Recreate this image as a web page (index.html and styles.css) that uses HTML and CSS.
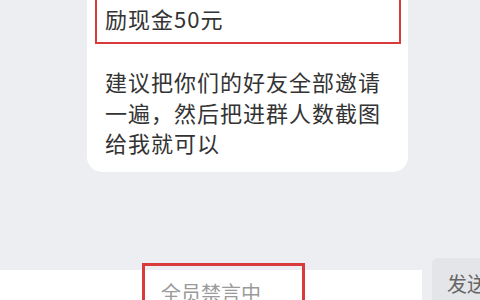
FILE: index.html
```html
<!DOCTYPE html>
<html lang="zh-CN">
<head>
<meta charset="utf-8">
<title>群聊</title>
<link rel="stylesheet" href="styles.css">
</head>
<body>
<div class="page">
  <div class="chat">
    <div class="bubble">
      <div class="highlight">
        <p class="line">邀请好友进群满百人可获奖</p>
        <p class="line">励现金50元</p>
      </div>
      <p class="msg">建议把你们的好友全部邀请一遍，然后把进群人数截图给我就可以</p>
    </div>
  </div>
  <div class="composer">
    <div class="input">
      <span class="placeholder">全员禁言中</span>
      <div class="mark"></div>
    </div>
    <div class="send">发送</div>
  </div>
</div>
</body>
</html>
```
FILE: styles.css
```css
html, body {
  margin: 0;
  padding: 0;
}
body {
  width: 480px;
  height: 300px;
  overflow: hidden;
  background: #edeef1;
  font-family: "Noto Sans CJK SC", "Noto Sans", sans-serif;
  color: #333;
}
.page {
  display: flex;
  flex-direction: column;
  height: 300px;
}
.chat {
  flex: 1;
  padding-left: 87px;
}
.bubble {
  width: 321px;
  box-sizing: border-box;
  margin-top: -46px;
  padding: 8px 7px 14px 8px;
  background: #fff;
  border-radius: 15px;
}
.highlight {
  border: 2px solid #d93b3d;
  padding: 8px 8px 8px 8px;
}
.line {
  margin: 0;
  font-size: 22px;
  line-height: 31px;
  letter-spacing: 1px;
  white-space: nowrap;
  overflow: hidden;
}
.msg {
  margin: 22px 0 0 0;
  padding-left: 10px;
  padding-right: 16px;
  font-size: 22px;
  line-height: 30.5px;
  letter-spacing: 1px;
}
.composer {
  display: flex;
  align-items: flex-end;
  height: 42px;
}
.input {
  position: relative;
  width: 422px;
  height: 30px;
  background: #fff;
}
.placeholder {
  position: absolute;
  left: 161px;
  top: 9px;
  font-size: 20px;
  line-height: 28px;
  color: #9a9a9a;
}
.mark {
  position: absolute;
  left: 142px;
  top: -7px;
  width: 163px;
  height: 60px;
  box-sizing: border-box;
  border: 3px solid #d93b3d;
}
.send {
  margin-left: 10px;
  flex: 1;
  height: 42px;
  background: #e4e5e9;
  border-radius: 6px 0 0 0;
  padding-left: 15px;
  padding-top: 12px;
  box-sizing: border-box;
  font-size: 20px;
  line-height: 28px;
  color: #666;
  white-space: nowrap;
  overflow: hidden;
}
```
